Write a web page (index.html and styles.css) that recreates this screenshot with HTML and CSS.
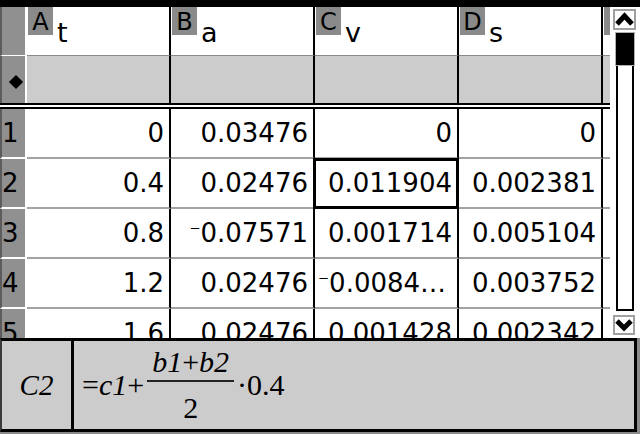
FILE: index.html
```html
<!DOCTYPE html>
<html>
<head>
<meta charset="utf-8">
<link rel="stylesheet" href="styles.css">
</head>
<body>
<div class="topbar"></div>
<div class="main">
  <div class="grid">
    <div class="row head">
      <div class="rh"></div>
      <div class="cell"><span class="lbl">A</span><span class="var">t</span></div>
      <div class="cell"><span class="lbl">B</span><span class="var">a</span></div>
      <div class="cell"><span class="lbl">C</span><span class="var">v</span></div>
      <div class="cell"><span class="lbl">D</span><span class="var">s</span></div>
      <div class="cell edge"><span class="lbl">E</span></div>
    </div>
    <div class="row frow">
      <div class="rh"><span class="diamond"></span></div>
      <div class="cell"></div>
      <div class="cell"></div>
      <div class="cell"></div>
      <div class="cell"></div>
      <div class="cell edge"></div>
    </div>
    <div class="dbl"></div>
    <div class="row data">
      <div class="rh">1</div>
      <div class="cell">0</div>
      <div class="cell">0.03476</div>
      <div class="cell">0</div>
      <div class="cell">0</div>
      <div class="cell edge"></div>
    </div>
    <div class="row data">
      <div class="rh">2</div>
      <div class="cell">0.4</div>
      <div class="cell">0.02476</div>
      <div class="cell sel">0.011904</div>
      <div class="cell">0.002381</div>
      <div class="cell edge"></div>
    </div>
    <div class="row data">
      <div class="rh">3</div>
      <div class="cell">0.8</div>
      <div class="cell"><span class="neg">⁻</span>0.07571</div>
      <div class="cell">0.001714</div>
      <div class="cell">0.005104</div>
      <div class="cell edge"></div>
    </div>
    <div class="row data">
      <div class="rh">4</div>
      <div class="cell">1.2</div>
      <div class="cell">0.02476</div>
      <div class="cell left"><span class="neg">⁻</span>0.0084…</div>
      <div class="cell">0.003752</div>
      <div class="cell edge"></div>
    </div>
    <div class="row data">
      <div class="rh">5</div>
      <div class="cell">1.6</div>
      <div class="cell">0.02476</div>
      <div class="cell">0.001428</div>
      <div class="cell">0.002342</div>
      <div class="cell edge"></div>
    </div>
  </div>
  <div class="scroll">
    <div class="sbtn up">
      <svg width="19" height="17" viewBox="0 0 19 17"><polyline points="2,13 9.5,5 17,13" fill="none" stroke="#000" stroke-width="5" stroke-linejoin="miter"/></svg>
    </div>
    <div class="track"><div class="thumb"></div></div>
    <div class="sbtn down">
      <svg width="18" height="16" viewBox="0 0 18 16"><polyline points="2,4 9,11 16,4" fill="none" stroke="#000" stroke-width="5" stroke-linejoin="miter"/></svg>
    </div>
  </div>
</div>
<div class="panel">
  <div class="fbox">
    <div class="ref">C2</div>
    <div class="expr">
      <span class="t">=<i>c1</i>+</span>
      <span class="frac">
        <span class="num"><i>b1</i>+<i>b2</i></span>
        <span class="bar"></span>
        <span class="den">2</span>
      </span>
      <span class="t">·0.4</span>
    </div>
  </div>
</div>
</body>
</html>
```
FILE: styles.css
```css
* {
  box-sizing: border-box;
  margin: 0;
  padding: 0;
}

body {
  width: 640px;
  height: 434px;
  overflow: hidden;
  background: #fff;
  color: #000;
  font-family: "DejaVu Sans", sans-serif;
}

.topbar {
  height: 7px;
  background: #000;
}

.main {
  display: flex;
  height: 331px;
}

.grid {
  width: 610px;
  flex: none;
  overflow: hidden;
  display: flex;
  flex-direction: column;
}

.row {
  display: flex;
  flex: none;
}

.rh {
  width: 27px;
  flex: none;
  background: #909090;
  border-left: 2px solid #5c5c5c;
  border-right: 2px solid #fff;
}

.cell {
  width: 144px;
  flex: none;
  border-right: 2px solid #000;
}

.edge {
  flex: 1;
  width: auto;
  border-right: 0;
  overflow: hidden;
}

.head {
  height: 49px;
}

.head .cell {
  display: flex;
  align-items: flex-start;
  border-bottom: 1px solid #8a8a8a;
  background: #fff;
}

.head .rh {
  border-bottom: 1px solid #fff;
}

.lbl {
  flex: none;
  width: 25px;
  height: 28px;
  margin-left: 1px;
  padding-top: 3px;
  background: #8a8a8a;
  font-size: 24px;
  line-height: 25px;
  text-align: center;
}

.var {
  font-size: 27px;
  line-height: 26px;
  margin: 13px 0 0 4px;
}

.frow {
  height: 47px;
  background: #ccc;
}

.frow .rh {
  display: flex;
  align-items: center;
  padding-left: 9px;
}

.diamond {
  width: 10px;
  height: 10px;
  margin-top: 4px;
  background: #000;
  transform: rotate(45deg);
}

.dbl {
  flex: none;
  height: 6px;
  border-top: 2px solid #000;
  border-bottom: 2px solid #000;
  background: #fff;
}

.data {
  height: 50px;
}

.data .cell {
  border-bottom: 2px solid #a3a3a3;
  font-size: 26px;
  line-height: 48px;
  text-align: right;
  padding-right: 5px;
  white-space: nowrap;
  overflow: hidden;
}

.neg {
  font-size: 21px;
  vertical-align: 2px;
}

.data .cell.left {
  text-align: left;
  padding-left: 3px;
}

.data .cell.edge {
  padding: 0;
}

.data .rh {
  border-bottom: 2px solid #fff;
  font-size: 26px;
  line-height: 48px;
}

.data .cell.sel {
  position: relative;
  overflow: visible;
}

.sel::after {
  content: "";
  position: absolute;
  left: -2px;
  right: -2px;
  top: -1px;
  bottom: -2px;
  border: 3px solid #000;
}

.scroll {
  width: 30px;
  flex: none;
  display: flex;
  flex-direction: column;
  padding-top: 2px;
}

.sbtn {
  display: flex;
  align-items: center;
  justify-content: center;
  border: 2px solid #a0a0a0;
  background: #fff;
}

.up {
  width: 23px;
  height: 21px;
  margin-left: 3px;
}

.track {
  width: 18px;
  height: 278px;
  margin: 3px 0 0 6px;
  border: 2px solid #000;
  background: #fff;
}

.thumb {
  height: 32px;
  margin: -2px -2px 0;
  background: #000;
  box-shadow: 0 0 0 1px #b0b0b0;
}

.down {
  width: 22px;
  height: 20px;
  margin: 4px 0 0 3px;
}

.panel {
  height: 96px;
  display: flex;
  align-items: flex-start;
  background: #8a8a8a;
}

.fbox {
  width: 637px;
  height: 94px;
  display: flex;
  background: #ccc;
  border: 3px solid #000;
  border-left: 2px solid #3a3a3a;
}

.ref {
  width: 72px;
  flex: none;
  display: flex;
  align-items: center;
  justify-content: center;
  border-right: 3px solid #000;
  font-family: "Liberation Serif", serif;
  font-style: italic;
  font-size: 29px;
}

.expr {
  display: flex;
  align-items: center;
  padding-left: 8px;
  font-family: "Liberation Serif", serif;
  font-size: 30px;
  line-height: 30px;
}

.expr i {
  font-style: italic;
}

.frac {
  display: flex;
  flex-direction: column;
  align-items: center;
  margin: 0 3px 0 3px;
}

.num {
  padding: 0 5px 3px;
}

.bar {
  align-self: stretch;
  height: 2px;
  background: #222;
}

.den {
  padding-top: 11px;
}
```
